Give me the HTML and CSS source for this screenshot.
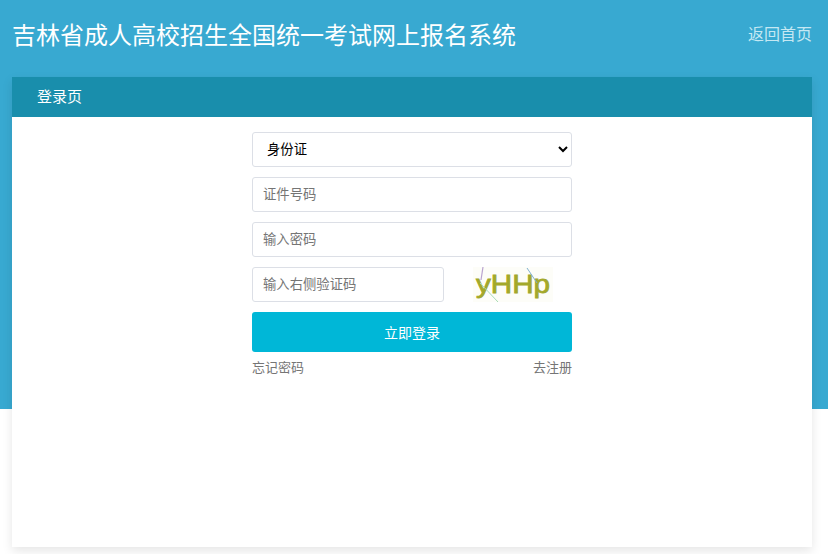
FILE: index.html
```html
<!DOCTYPE html>
<html lang="zh-CN">
<head>
<meta charset="utf-8">
<title>吉林省成人高校招生全国统一考试网上报名系统</title>
<link rel="stylesheet" href="styles.css">
</head>
<body>
<div class="band"></div>
<div class="page">
  <header class="top">
    <h1 class="title">吉林省成人高校招生全国统一考试网上报名系统</h1>
    <a class="home" href="#">返回首页</a>
  </header>
  <main class="card">
    <div class="card-head">登录页</div>
    <form class="form">
      <select class="field select"><option>身份证</option></select>
      <input class="field" type="text" placeholder="证件号码">
      <input class="field" type="password" placeholder="输入密码">
      <div class="captcha-row">
        <input class="field captcha-input" type="text" placeholder="输入右侧验证码">
        <svg class="captcha" width="80" height="35" viewBox="0 0 80 35" role="img" aria-label="验证码">
          <rect width="80" height="35" fill="#fdfdf8"/>
          <text class="captcha-text" x="3" y="25.5" textLength="74" lengthAdjust="spacingAndGlyphs">yHHp</text>
          <path d="M10 0 L8 13" stroke="#b9a3cf" stroke-width="1.2" fill="none"/>
          <path d="M7 16 L25 35" stroke="#a8dcb4" stroke-width="1" fill="none"/>
          <path d="M54 1 L64 16" stroke="#7fb0cf" stroke-width="1" fill="none"/>
        </svg>
      </div>
      <button class="submit" type="button">立即登录</button>
      <div class="links">
        <a href="#">忘记密码</a>
        <a href="#">去注册</a>
      </div>
    </form>
  </main>
</div>
</body>
</html>
```
FILE: styles.css
```css
* { box-sizing: border-box; }
html, body { margin: 0; height: 100%; }
body {
  position: relative;
  background: #fff;
  overflow: hidden;
  font-family: "Liberation Sans", "Noto Sans CJK SC", sans-serif;
}
.band {
  position: absolute;
  left: 0;
  top: 0;
  width: 100%;
  height: 409px;
  background: #38a9d1;
}
.page {
  position: relative;
  padding: 0 16px 0 12px;
}
.top {
  height: 77px;
  padding-bottom: 11px;
  display: flex;
  justify-content: space-between;
  align-items: center;
}
.title {
  margin: 0;
  font-size: 24px;
  font-weight: 400;
  color: #fff;
}
.home {
  font-size: 16px;
  color: #c5e8f3;
  text-decoration: none;
}
.card {
  height: 470px;
  background: #fff;
  box-shadow: 0 4px 10px rgba(0, 0, 0, 0.1);
}
.card-head {
  height: 40px;
  padding-left: 25px;
  line-height: 40px;
  font-size: 15px;
  color: #fff;
  background: #198eac;
}
.form {
  width: 320px;
  margin: 15px auto 0;
  display: flex;
  flex-direction: column;
  gap: 10px;
}
.field {
  display: block;
  width: 100%;
  height: 35px;
  padding: 0 10px;
  border: 1px solid #dcdfe6;
  border-radius: 3px;
  background: #fff;
  font-family: inherit;
  font-size: 13.33px;
  color: #000;
  outline: none;
}
.field::placeholder { color: #757575; opacity: 1; }
.select { padding-left: 10px; }
.captcha-row {
  display: flex;
  align-items: center;
  gap: 29px;
}
.captcha-input { width: 192px; flex: none; }
.captcha { display: block; flex: none; }
.captcha-text {
  font-family: "Liberation Sans", sans-serif;
  font-size: 25px;
  stroke: #a3a82a;
  stroke-width: 0.8px;
  fill: #a3a82a;
}
.submit {
  height: 40px;
  border: 0;
  border-radius: 3px;
  background: #00b7d7;
  color: #fff;
  font-family: inherit;
  font-size: 14px;
}
.links {
  margin-top: -2px;
  display: flex;
  justify-content: space-between;
  font-size: 13px;
  line-height: 16px;
}
.links a { color: #757575; text-decoration: none; }
```
